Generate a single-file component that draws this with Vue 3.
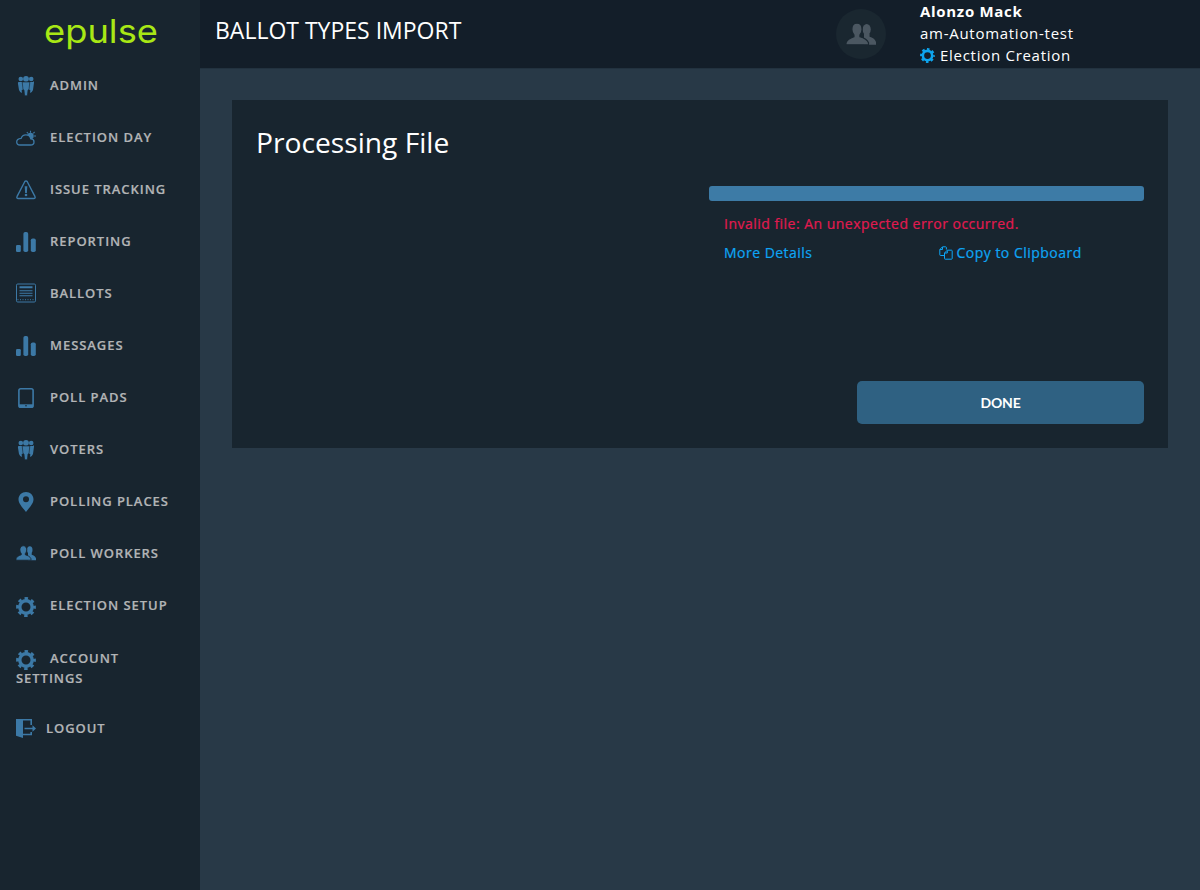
<script setup>
const items = [
  { label: 'ADMIN', icon: 'people' },
  { label: 'ELECTION DAY', icon: 'cloud' },
  { label: 'ISSUE TRACKING', icon: 'warn' },
  { label: 'REPORTING', icon: 'bars' },
  { label: 'BALLOTS', icon: 'ballot' },
  { label: 'MESSAGES', icon: 'bars' },
  { label: 'POLL PADS', icon: 'tablet' },
  { label: 'VOTERS', icon: 'people' },
  { label: 'POLLING PLACES', icon: 'pin' },
  { label: 'POLL WORKERS', icon: 'users' },
  { label: 'ELECTION SETUP', icon: 'gear' },
  { label: 'ACCOUNT SETTINGS', icon: 'gear', cls: 'is-account' },
  { label: 'LOGOUT', icon: 'logout', cls: 'is-logout' }
]
</script>

<template>
  <div class="app">
    <aside class="sidebar">
      <div class="logo">epulse</div>
      <nav class="nav">
        <a v-for="item in items" :key="item.label" class="nav-item" :class="item.cls">
          <svg class="nav-icon" viewBox="0 0 20 20" aria-hidden="true">
            <g v-if="item.icon === 'people'" fill="currentColor">
              <circle cx="4.800" cy="4" r="2.300" />
              <circle cx="15.200" cy="4" r="2.300" />
              <circle cx="10" cy="3.800" r="2.900" />
              <path d="M2.600 7h4l.6 7.500-1.500.6.200 3-1.700-1.200-1.200-1.800L2.100 9.500C1.800 8 1.900 7.300 2.600 7zM17.400 7h-4l-.6 7.500 1.500.6-.2 3 1.700-1.200 1.200-1.800.9-6.600c.3-1.500.2-2.200-.5-2.500z" />
              <path d="M6.200 7h7.600l-.8 7.500-1 .5-.6 5.200-1.400.8-1.400-.8-.6-5.200-1-.5z" stroke="#18252f" stroke-width=".6" />
            </g>
            <g v-else-if="item.icon === 'cloud'">
              <circle cx="14.500" cy="9" r="3.200" fill="currentColor" />
              <path d="M14.500 3.700v2M18.600 5l-1.300 1.300M20 9h-2M10.800 5l1.200 1.300" stroke="currentColor" stroke-width="1.100" fill="none" />
              <path d="M4 18h10.500c2.200 0 3.500-1.400 3.500-3.100 0-1.800-1.400-3-3.200-3-.6-2.600-2.700-4-5-4-2.300 0-4 1.400-4.700 3.500C2.500 11.600.7 13 .7 15c0 1.800 1.400 3 3.300 3z" fill="#18252f" stroke="currentColor" stroke-width="1.300" />
            </g>
            <g v-else-if="item.icon === 'warn'">
              <path d="M8.700 2.700c.6-1 2-1 2.600 0l7.600 14.700c.7 1.200.1 2.100-1.100 2.100H2.200c-1.200 0-1.800-.9-1.100-2.100z" fill="none" stroke="currentColor" stroke-width="1.400" stroke-linejoin="round" />
              <path d="M8.700 7.200h2.600l-.4 6.800H9.100z" fill="currentColor" />
              <circle cx="10" cy="16" r="1.300" fill="currentColor" />
            </g>
            <g v-else-if="item.icon === 'bars'" fill="currentColor">
              <rect x="0" y="14" width="4.800" height="7" rx="1.200" />
              <rect x="7.400" y="1" width="4.800" height="20" rx="1.800" />
              <rect x="14.800" y="7.500" width="5" height="13.500" rx="1.800" />
            </g>
            <g v-else-if="item.icon === 'ballot'">
              <rect x=".5" y="1" width="19" height="18" rx="1.200" fill="none" stroke="currentColor" />
              <path d="M3.500 3.300h13v2h-13zM3.500 7.200h13v1h-13zM3.500 9.700h13v1h-13zM3.500 12.200h13v1h-13z" fill="currentColor" />
              <path d="M1.500 16.700h17" stroke="currentColor" stroke-dasharray="1 1.500" fill="none" />
            </g>
            <g v-else-if="item.icon === 'tablet'">
              <rect x="2.900" y="1.800" width="14.200" height="18.400" rx="1.800" fill="none" stroke="currentColor" stroke-width="1.600" />
              <rect x="2.900" y="17.300" width="14.200" height="3" fill="currentColor" />
              <circle cx="10" cy="18.800" r=".8" fill="#18252f" />
            </g>
            <path v-else-if="item.icon === 'pin'" fill="currentColor" fill-rule="evenodd" d="M10 1c4.200 0 7.500 3.200 7.500 7.300 0 4.800-4.600 8.700-7.500 12.700C7.100 17 2.500 13.100 2.500 8.300 2.500 4.200 5.800 1 10 1zm0 4.300a3 3 0 1 0 0 6 3 3 0 0 0 0-6z" />
            <g v-else-if="item.icon === 'users'" fill="currentColor">
              <ellipse cx="13.800" cy="7" rx="2.700" ry="3.700" />
              <path d="M12 10h3.700v1.800c2 .6 3.600 1.500 4.300 3.500v1.900h-8z" />
              <path d="M7.300 2.800c2.100 0 3.400 1.700 3.400 4 0 1.700-.6 3-1.400 3.800v1.200c2.700.8 4.800 1.700 5.700 4v1.400H0v-1.400c.8-2.300 2.900-3.200 5.300-4v-1.200C4.500 9.800 3.900 8.500 3.900 6.800c0-2.300 1.300-4 3.400-4z" stroke="#18252f" stroke-width=".8" />
            </g>
            <g v-else-if="item.icon === 'gear'" fill="none" stroke="currentColor">
              <circle cx="10" cy="12" r="6.200" stroke-width="3.400" />
              <circle cx="10" cy="12" r="8.400" stroke-width="3" stroke-dasharray="3.400 3.200" stroke-dashoffset="1.700" />
            </g>
            <g v-else-if="item.icon === 'logout'" fill="currentColor">
              <path d="M0 1h7v19l-7-2.300z" />
              <path d="M7 1h9v6h-1.600V2.500H7zM7 15.800h7.400V14H16v3.300H7z" />
              <path d="M8.500 9.700h8V7.200l3.500 3.300-3.500 3.300v-2.500h-8z" />
            </g>
          </svg><span>{{ item.label }}</span>
        </a>
      </nav>
    </aside>

    <div class="main">
      <header class="topbar">
        <h1 class="page-title">BALLOT TYPES IMPORT</h1>
        <div class="account">
          <div class="avatar">
            <svg viewBox="0 0 20 20" width="30" height="30" aria-hidden="true">
              <g fill="#4b5761">
                <ellipse cx="13.800" cy="7" rx="2.700" ry="3.700" />
                <path d="M12 10h3.700v1.800c2 .6 3.600 1.500 4.300 3.500v1.900h-8z" />
                <path d="M7.300 2.800c2.100 0 3.400 1.700 3.400 4 0 1.700-.6 3-1.400 3.800v1.200c2.700.8 4.800 1.700 5.700 4v1.400H0v-1.400c.8-2.300 2.900-3.200 5.300-4v-1.200C4.500 9.800 3.900 8.500 3.900 6.800c0-2.300 1.300-4 3.400-4z" stroke="#1a2730" stroke-width=".8" />
              </g>
            </svg>
          </div>
          <div class="who">
            <div class="who-name">Alonzo Mack</div>
            <div class="who-line">am-Automation-test</div>
            <div class="who-line">
              <svg class="who-gear" viewBox="0 0 20 20" aria-hidden="true">
                <g fill="none" stroke="#0ea5ee">
                  <circle cx="10" cy="10" r="6.200" stroke-width="3.400" />
                  <circle cx="10" cy="10" r="8.400" stroke-width="3" stroke-dasharray="3.400 3.200" stroke-dashoffset="1.700" />
                </g>
              </svg>Election Creation
            </div>
          </div>
        </div>
      </header>

      <main class="content">
        <section class="card">
          <h2 class="card-title">Processing File</h2>
          <div class="status">
            <div class="progress"></div>
            <p class="error">Invalid file: An unexpected error occurred.</p>
            <div class="links">
              <a class="link">More Details</a>
              <a class="link copy">
                <svg class="copy-icon" viewBox="0 0 14 14" aria-hidden="true">
                  <path d="M5 9.500H1.500a.7.700 0 0 1-.7-.7V3.500L3.500.8h3.200c.4 0 .7.300.7.700v2M3.500 1v2.500H1" fill="none" stroke="currentColor" />
                  <path d="M8.300 4.200h4.200c.4 0 .7.300.7.700v7.600c0 .4-.3.700-.7.700H6.200a.7.700 0 0 1-.7-.7V7zM8.300 4.500V7H5.700" fill="none" stroke="currentColor" />
                </svg>Copy to Clipboard
              </a>
            </div>
          </div>
          <div class="actions">
            <button class="done" type="button">DONE</button>
          </div>
        </section>
      </main>
    </div>
  </div>
</template>

<style>
html, body { margin: 0; background: #283947; }
</style>

<style scoped>
.app {
  display: flex;
  width: 1200px;
  height: 890px;
  overflow: hidden;
  font-family: "Open Sans", "Liberation Sans", sans-serif;
  background: #283947;
}
.sidebar {
  width: 200px;
  flex: none;
  background: #18252f;
}
.logo {
  height: 59px;
  box-sizing: border-box;
  padding-left: 40px;
  font-family: "Inter", sans-serif;
  font-size: 33px;
  font-weight: 400;
  line-height: 62px;
  color: #a8e815;
  transform: scaleX(1.1);
  transform-origin: left center;
}
.nav { display: flex; flex-direction: column; }
.nav-item {
  display: block;
  padding: 16px;
  font-size: 13px;
  font-weight: 600;
  letter-spacing: 0.95px;
  line-height: 20px;
  color: #b2b4b6;
  -webkit-text-stroke: 0.2px currentColor;
}
.is-account { padding-top: 17px; padding-bottom: 14px; }
.nav-icon {
  display: inline-block;
  width: 20px;
  height: 20px;
  margin-right: 14px;
  vertical-align: top;
  color: #3c79a6;
  overflow: visible;
}
.is-logout .nav-icon { margin-right: 10px; }
.main {
  flex: 1;
  min-width: 0;
  display: flex;
  flex-direction: column;
}
.topbar {
  height: 68px;
  flex: none;
  display: flex;
  justify-content: space-between;
  background: #131e29;
  box-shadow: 0 1px 0 #22323f;
}
.page-title {
  margin: 0;
  padding: 12px 0 0 15px;
  font-size: 23px;
  font-weight: 400;
  line-height: 36px;
  color: #fff;
}
.account {
  display: flex;
  width: 364px;
  box-sizing: border-box;
}
.avatar {
  width: 50px;
  height: 50px;
  margin: 9px 34px 0 0;
  border-radius: 50%;
  background: #1a2730;
  display: flex;
  align-items: center;
  justify-content: center;
}
.who { color: #fff; font-size: 15px; line-height: 22px; }
.who-name { font-weight: 700; letter-spacing: 0.7px; }
.who-line { letter-spacing: 0.72px; white-space: nowrap; }
.who-gear {
  width: 15px;
  height: 15px;
  margin-right: 5px;
  vertical-align: -2px;
}
.content { flex: 1; padding: 32px; }
.card {
  height: 348px;
  box-sizing: border-box;
  padding: 22px 24px 24px;
  background: #18252f;
  display: flex;
  flex-direction: column;
}
.card-title {
  margin: 0;
  font-size: 28.2px;
  font-weight: 400;
  line-height: 40px;
  color: #fff;
}
.status {
  align-self: flex-end;
  width: 435px;
  margin-top: 24px;
}
.progress {
  height: 15px;
  border-radius: 3px;
  background: #3d7ba6;
}
.error {
  margin: 13px 0 0 15px;
  font-size: 14px;
  line-height: 20px;
  letter-spacing: 0.48px;
  color: #e21a50;
  -webkit-text-stroke: 0.2px currentColor;
}
.links {
  display: flex;
  margin: 9px 0 0 15px;
}
.link {
  font-size: 14px;
  line-height: 20px;
  letter-spacing: 0.48px;
  color: #0ea5f5;
  -webkit-text-stroke: 0.2px currentColor;
}
.copy { margin-left: 126px; }
.copy-icon {
  width: 14px;
  height: 14px;
  margin-right: 4px;
  vertical-align: -2px;
}
.actions {
  margin-top: auto;
  display: flex;
  justify-content: flex-end;
}
.done {
  width: 287px;
  height: 43px;
  border: 0;
  border-radius: 5px;
  background: #2f6182;
  color: #fff;
  font-family: "Lato", sans-serif;
  font-size: 14px;
  font-weight: 700;
  letter-spacing: -0.2px;
}
</style>
